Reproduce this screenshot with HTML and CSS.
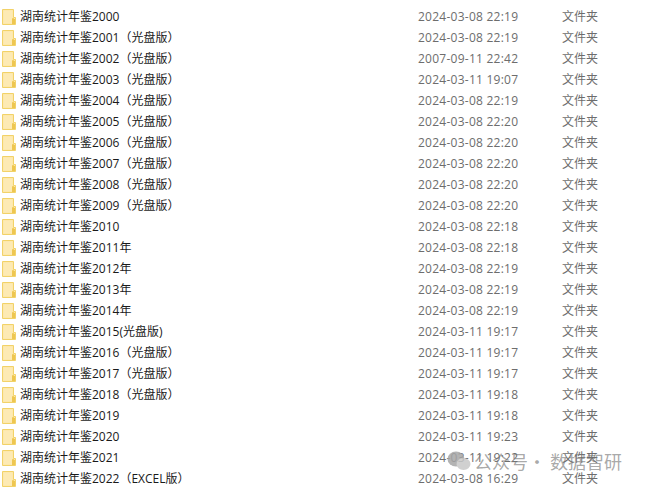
FILE: index.html
```html
<!DOCTYPE html>
<html lang="zh-CN">
<head>
  <meta charset="UTF-8" />
  <title>湖南统计年鉴</title>
  <link rel="stylesheet" href="styles.css">
</head>
<body>
  <svg class="defs" width="0" height="0">
    <symbol id="folder" viewBox="0 0 14 16">
      <path d="M0.5 0.5H11.5V8.5H13.5V15.5H0.5Z" fill="#fde6a4" stroke="#f2d268"/>
      <path d="M1.5 1.5H10.5V14.5H1.5Z" fill="#fdeab4"/>
      <path d="M10.5 15V9.5H11.5V15M12.5 10V15" fill="none" stroke="#eec650"/>
    </symbol>
  </svg>
  <div class="lista">
    <div class="fila"><svg class="icono"><use href="#folder"/></svg><span class="nombre">湖南统计年鉴2000</span><span class="fecha">2024-03-08 22:19</span><span class="tipo">文件夹</span></div>
    <div class="fila"><svg class="icono"><use href="#folder"/></svg><span class="nombre">湖南统计年鉴2001（光盘版）</span><span class="fecha">2024-03-08 22:19</span><span class="tipo">文件夹</span></div>
    <div class="fila"><svg class="icono"><use href="#folder"/></svg><span class="nombre">湖南统计年鉴2002（光盘版）</span><span class="fecha">2007-09-11 22:42</span><span class="tipo">文件夹</span></div>
    <div class="fila"><svg class="icono"><use href="#folder"/></svg><span class="nombre">湖南统计年鉴2003（光盘版）</span><span class="fecha">2024-03-11 19:07</span><span class="tipo">文件夹</span></div>
    <div class="fila"><svg class="icono"><use href="#folder"/></svg><span class="nombre">湖南统计年鉴2004（光盘版）</span><span class="fecha">2024-03-08 22:19</span><span class="tipo">文件夹</span></div>
    <div class="fila"><svg class="icono"><use href="#folder"/></svg><span class="nombre">湖南统计年鉴2005（光盘版）</span><span class="fecha">2024-03-08 22:20</span><span class="tipo">文件夹</span></div>
    <div class="fila"><svg class="icono"><use href="#folder"/></svg><span class="nombre">湖南统计年鉴2006（光盘版）</span><span class="fecha">2024-03-08 22:20</span><span class="tipo">文件夹</span></div>
    <div class="fila"><svg class="icono"><use href="#folder"/></svg><span class="nombre">湖南统计年鉴2007（光盘版）</span><span class="fecha">2024-03-08 22:20</span><span class="tipo">文件夹</span></div>
    <div class="fila"><svg class="icono"><use href="#folder"/></svg><span class="nombre">湖南统计年鉴2008（光盘版）</span><span class="fecha">2024-03-08 22:20</span><span class="tipo">文件夹</span></div>
    <div class="fila"><svg class="icono"><use href="#folder"/></svg><span class="nombre">湖南统计年鉴2009（光盘版）</span><span class="fecha">2024-03-08 22:20</span><span class="tipo">文件夹</span></div>
    <div class="fila"><svg class="icono"><use href="#folder"/></svg><span class="nombre">湖南统计年鉴2010</span><span class="fecha">2024-03-08 22:18</span><span class="tipo">文件夹</span></div>
    <div class="fila"><svg class="icono"><use href="#folder"/></svg><span class="nombre">湖南统计年鉴2011年</span><span class="fecha">2024-03-08 22:18</span><span class="tipo">文件夹</span></div>
    <div class="fila"><svg class="icono"><use href="#folder"/></svg><span class="nombre">湖南统计年鉴2012年</span><span class="fecha">2024-03-08 22:19</span><span class="tipo">文件夹</span></div>
    <div class="fila"><svg class="icono"><use href="#folder"/></svg><span class="nombre">湖南统计年鉴2013年</span><span class="fecha">2024-03-08 22:19</span><span class="tipo">文件夹</span></div>
    <div class="fila"><svg class="icono"><use href="#folder"/></svg><span class="nombre">湖南统计年鉴2014年</span><span class="fecha">2024-03-08 22:19</span><span class="tipo">文件夹</span></div>
    <div class="fila"><svg class="icono"><use href="#folder"/></svg><span class="nombre">湖南统计年鉴2015(光盘版)</span><span class="fecha">2024-03-11 19:17</span><span class="tipo">文件夹</span></div>
    <div class="fila"><svg class="icono"><use href="#folder"/></svg><span class="nombre">湖南统计年鉴2016（光盘版）</span><span class="fecha">2024-03-11 19:17</span><span class="tipo">文件夹</span></div>
    <div class="fila"><svg class="icono"><use href="#folder"/></svg><span class="nombre">湖南统计年鉴2017（光盘版）</span><span class="fecha">2024-03-11 19:17</span><span class="tipo">文件夹</span></div>
    <div class="fila"><svg class="icono"><use href="#folder"/></svg><span class="nombre">湖南统计年鉴2018（光盘版）</span><span class="fecha">2024-03-11 19:18</span><span class="tipo">文件夹</span></div>
    <div class="fila"><svg class="icono"><use href="#folder"/></svg><span class="nombre">湖南统计年鉴2019</span><span class="fecha">2024-03-11 19:18</span><span class="tipo">文件夹</span></div>
    <div class="fila"><svg class="icono"><use href="#folder"/></svg><span class="nombre">湖南统计年鉴2020</span><span class="fecha">2024-03-11 19:23</span><span class="tipo">文件夹</span></div>
    <div class="fila"><svg class="icono"><use href="#folder"/></svg><span class="nombre">湖南统计年鉴2021</span><span class="fecha">2024-03-11 19:22</span><span class="tipo">文件夹</span></div>
    <div class="fila"><svg class="icono"><use href="#folder"/></svg><span class="nombre">湖南统计年鉴2022（EXCEL版）</span><span class="fecha">2024-03-08 16:29</span><span class="tipo">文件夹</span></div>
  </div>

  <!-- marca de agua encima de la lista -->
  <div class="marca">
    <svg class="marca-logo" viewBox="0 0 24 20">
      <ellipse cx="9" cy="8" rx="8.5" ry="7.5" fill="#a6a6a6"/>
      <ellipse cx="16.5" cy="13" rx="7" ry="6" fill="#c8c8c8"/>
    </svg>
    <span class="marca-texto">公众号</span>
    <span class="marca-texto">·</span>
    <span class="marca-texto marca-fin">数据智研</span>
  </div>
</body>
</html>
```

FILE: styles.css
```css
html, body {
  margin: 0;
  padding: 0;
  background: #ffffff;
}
body {
  width: 645px;
  height: 488px;
  overflow: hidden;
  position: relative;
  font-family: "Open Sans", "Noto Sans CJK SC", sans-serif;
  font-size: 12px;
}
.defs {
  position: absolute;
}
.lista {
  padding-top: 6px;
}
.fila {
  display: grid;
  grid-template-columns: 20px 398px 144px 1fr;
  align-items: center;
  height: 21px;
  line-height: 21px;
  white-space: nowrap;
}
.icono {
  width: 14px;
  height: 16px;
  margin-left: 2px;
}
.nombre {
  color: #1a1a1a;
}
.fecha,
.tipo {
  color: #6d6d6d;
}
.fecha {
  letter-spacing: 0.25px;
}
.marca {
  position: absolute;
  left: 447px;
  top: 449px;
  display: flex;
  align-items: center;
  white-space: nowrap;
}
.marca-texto {
  color: rgba(120, 120, 120, 0.65);
  font-family: "Noto Sans CJK SC", sans-serif;
  font-size: 18px;
  line-height: 24px;
}
.marca-fin {
  margin-left: 4px;
}
.marca-logo {
  width: 24px;
  height: 20px;
  margin-right: 3px;
  opacity: 0.85;
}
```
